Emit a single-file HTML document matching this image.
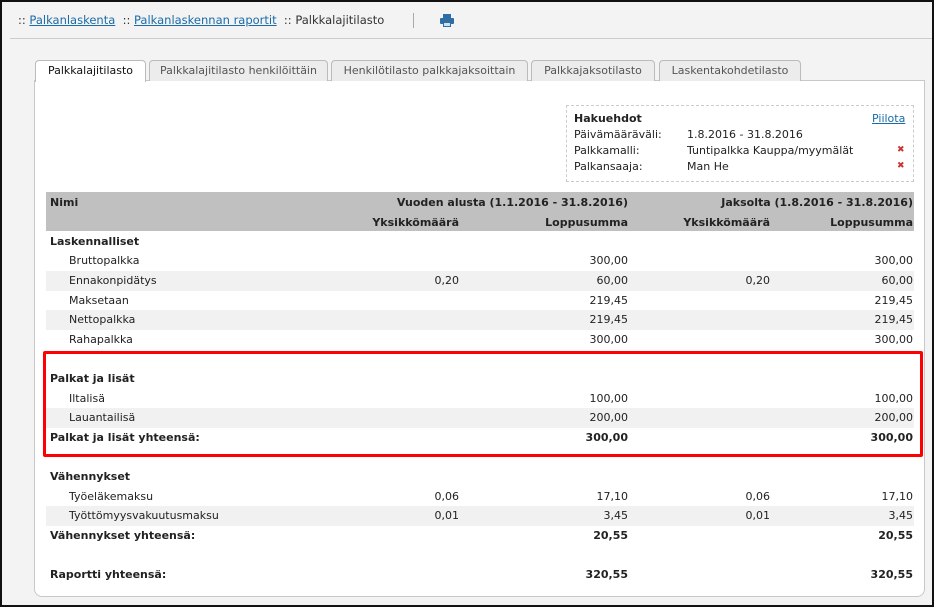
<!DOCTYPE html>
<html><head><meta charset="utf-8"><style>
*{margin:0;padding:0;box-sizing:border-box}
body{width:938px;height:614px;background:#fff;font-family:"DejaVu Sans","Liberation Sans",sans-serif;font-size:11px;color:#222;position:relative;overflow:hidden}
.frame{position:absolute;left:0;top:0;width:934px;height:607px;border:2px solid #111;background:#f3f3f3}
.a{position:absolute;white-space:nowrap}
a{color:#1a6ca8;text-decoration:underline}
.tab{position:absolute;top:60px;height:21px;border:1px solid #bbb;border-bottom:none;border-radius:4px 4px 0 0;background:#ececec;color:#555;font-size:11px;line-height:20px;text-align:center}
.tab.on{background:#fff;color:#111;height:22px;z-index:2}
.panel{position:absolute;left:34px;top:80px;width:891px;height:517px;background:#fff;border:1px solid #c8c8c8;border-radius:0 0 8px 8px}
.row{position:absolute;left:46px;width:868px;height:19.6px;line-height:19.6px}
.sh{background:#f1f1f1}
.c{position:absolute;top:0;text-align:right}
.b{font-weight:bold}
</style></head><body>
<div class="frame"></div>
<div class="a" style="left:18px;top:13px;color:#333;font-size:11.5px">:: <a>Palkanlaskenta</a> &nbsp;:: <a>Palkanlaskennan raportit</a> &nbsp;:: Palkkalajitilasto</div>
<div class="a" style="left:413px;top:13px;width:1px;height:15px;background:#aaa"></div>
<svg class="a" style="left:440px;top:14px" width="14" height="13" viewBox="0 0 14 13"><rect x="3" y="0" width="8" height="4" fill="#2f6ea5"/><rect x="0" y="4" width="14" height="6" rx="1" fill="#2f6ea5"/><rect x="3" y="8" width="8" height="5" fill="#2f6ea5"/><rect x="4" y="9" width="6" height="3" fill="#cfe0ef"/></svg>
<div class="a" style="left:10px;top:38px;width:922px;height:1px;background:#ccc"></div>
<div class="panel"></div>
<div class="tab on" style="left:35px;width:111px">Palkkalajitilasto</div>
<div class="tab" style="left:149px;width:179px">Palkkalajitilasto henkilöittäin</div>
<div class="tab" style="left:331px;width:197px">Henkilötilasto palkkajaksoittain</div>
<div class="tab" style="left:531px;width:124px">Palkkajaksotilasto</div>
<div class="tab" style="left:659px;width:142px">Laskentakohdetilasto</div>
<div class="a" style="left:566px;top:105px;width:348px;height:77px;border:1px dashed #ccc"></div>
<div class="a b" style="left:574px;top:112px">Hakuehdot</div>
<div class="a" style="left:872px;top:112px"><a>Piilota</a></div>
<div class="a" style="left:574px;top:128px">Päivämääräväli:</div><div class="a" style="left:687px;top:128px">1.8.2016 - 31.8.2016</div>
<div class="a" style="left:574px;top:144px">Palkkamalli:</div><div class="a" style="left:687px;top:144px">Tuntipalkka Kauppa/myymälät</div><div class="a" style="left:897px;top:145px;color:#c33;font-size:9px">✖</div>
<div class="a" style="left:574px;top:160px">Palkansaaja:</div><div class="a" style="left:687px;top:160px">Man He</div><div class="a" style="left:897px;top:161px;color:#c33;font-size:9px">✖</div>
<div class="a" style="left:46px;top:192px;width:868px;height:39px;background:#c0c0c0"></div>
<div class="row b" style="top:193px;background:transparent"><span class="c" style="left:4px;text-align:left">Nimi</span><span class="c" style="right:286px">Vuoden alusta (1.1.2016 - 31.8.2016)</span><span class="c" style="right:1px">Jaksolta (1.8.2016 - 31.8.2016)</span></div>
<div class="row b" style="top:212.6px"><span class="c" style="right:455px">Yksikkömäärä</span><span class="c" style="right:286px">Loppusumma</span><span class="c" style="right:144px">Yksikkömäärä</span><span class="c" style="right:1px">Loppusumma</span></div>
<div id="rows"></div>
<script>
var R=[["Laskennalliset",1],["Bruttopalkka",0,"","300,00","","300,00"],["Ennakonpidätys",0,"0,20","60,00","0,20","60,00",1],["Maksetaan",0,"","219,45","","219,45"],["Nettopalkka",0,"","219,45","","219,45",1],["Rahapalkka",0,"","300,00","","300,00"],[""],["Palkat ja lisät",1],["Iltalisä",0,"","100,00","","100,00"],["Lauantailisä",0,"","200,00","","200,00",1],["Palkat ja lisät yhteensä:",1,"","300,00","","300,00"],[""],["Vähennykset",1],["Työeläkemaksu",0,"0,06","17,10","0,06","17,10"],["Työttömyysvakuutusmaksu",0,"0,01","3,45","0,01","3,45",1],["Vähennykset yhteensä:",1,"","20,55","","20,55"],[""],["Raportti yhteensä:",1,"","320,55","","320,55"]];
var h="";R.forEach(function(r,i){var t=231.8+i*19.6;h+='<div class="row'+(r[6]?' sh':'')+(r[1]?' b':'')+'" style="top:'+t+'px"><span class="c" style="left:'+(r[1]?4:23)+'px;text-align:left">'+r[0]+'</span>'+(r[2]!==undefined?'<span class="c" style="right:455px">'+r[2]+'</span><span class="c" style="right:286px">'+r[3]+'</span><span class="c" style="right:144px">'+r[4]+'</span><span class="c" style="right:1px">'+r[5]+'</span>':'')+'</div>'});
document.getElementById("rows").innerHTML=h;
</script>
<div class="a" style="left:43px;top:351px;width:880px;height:106px;border:3px solid #f00;border-radius:2px"></div>
</body></html>
